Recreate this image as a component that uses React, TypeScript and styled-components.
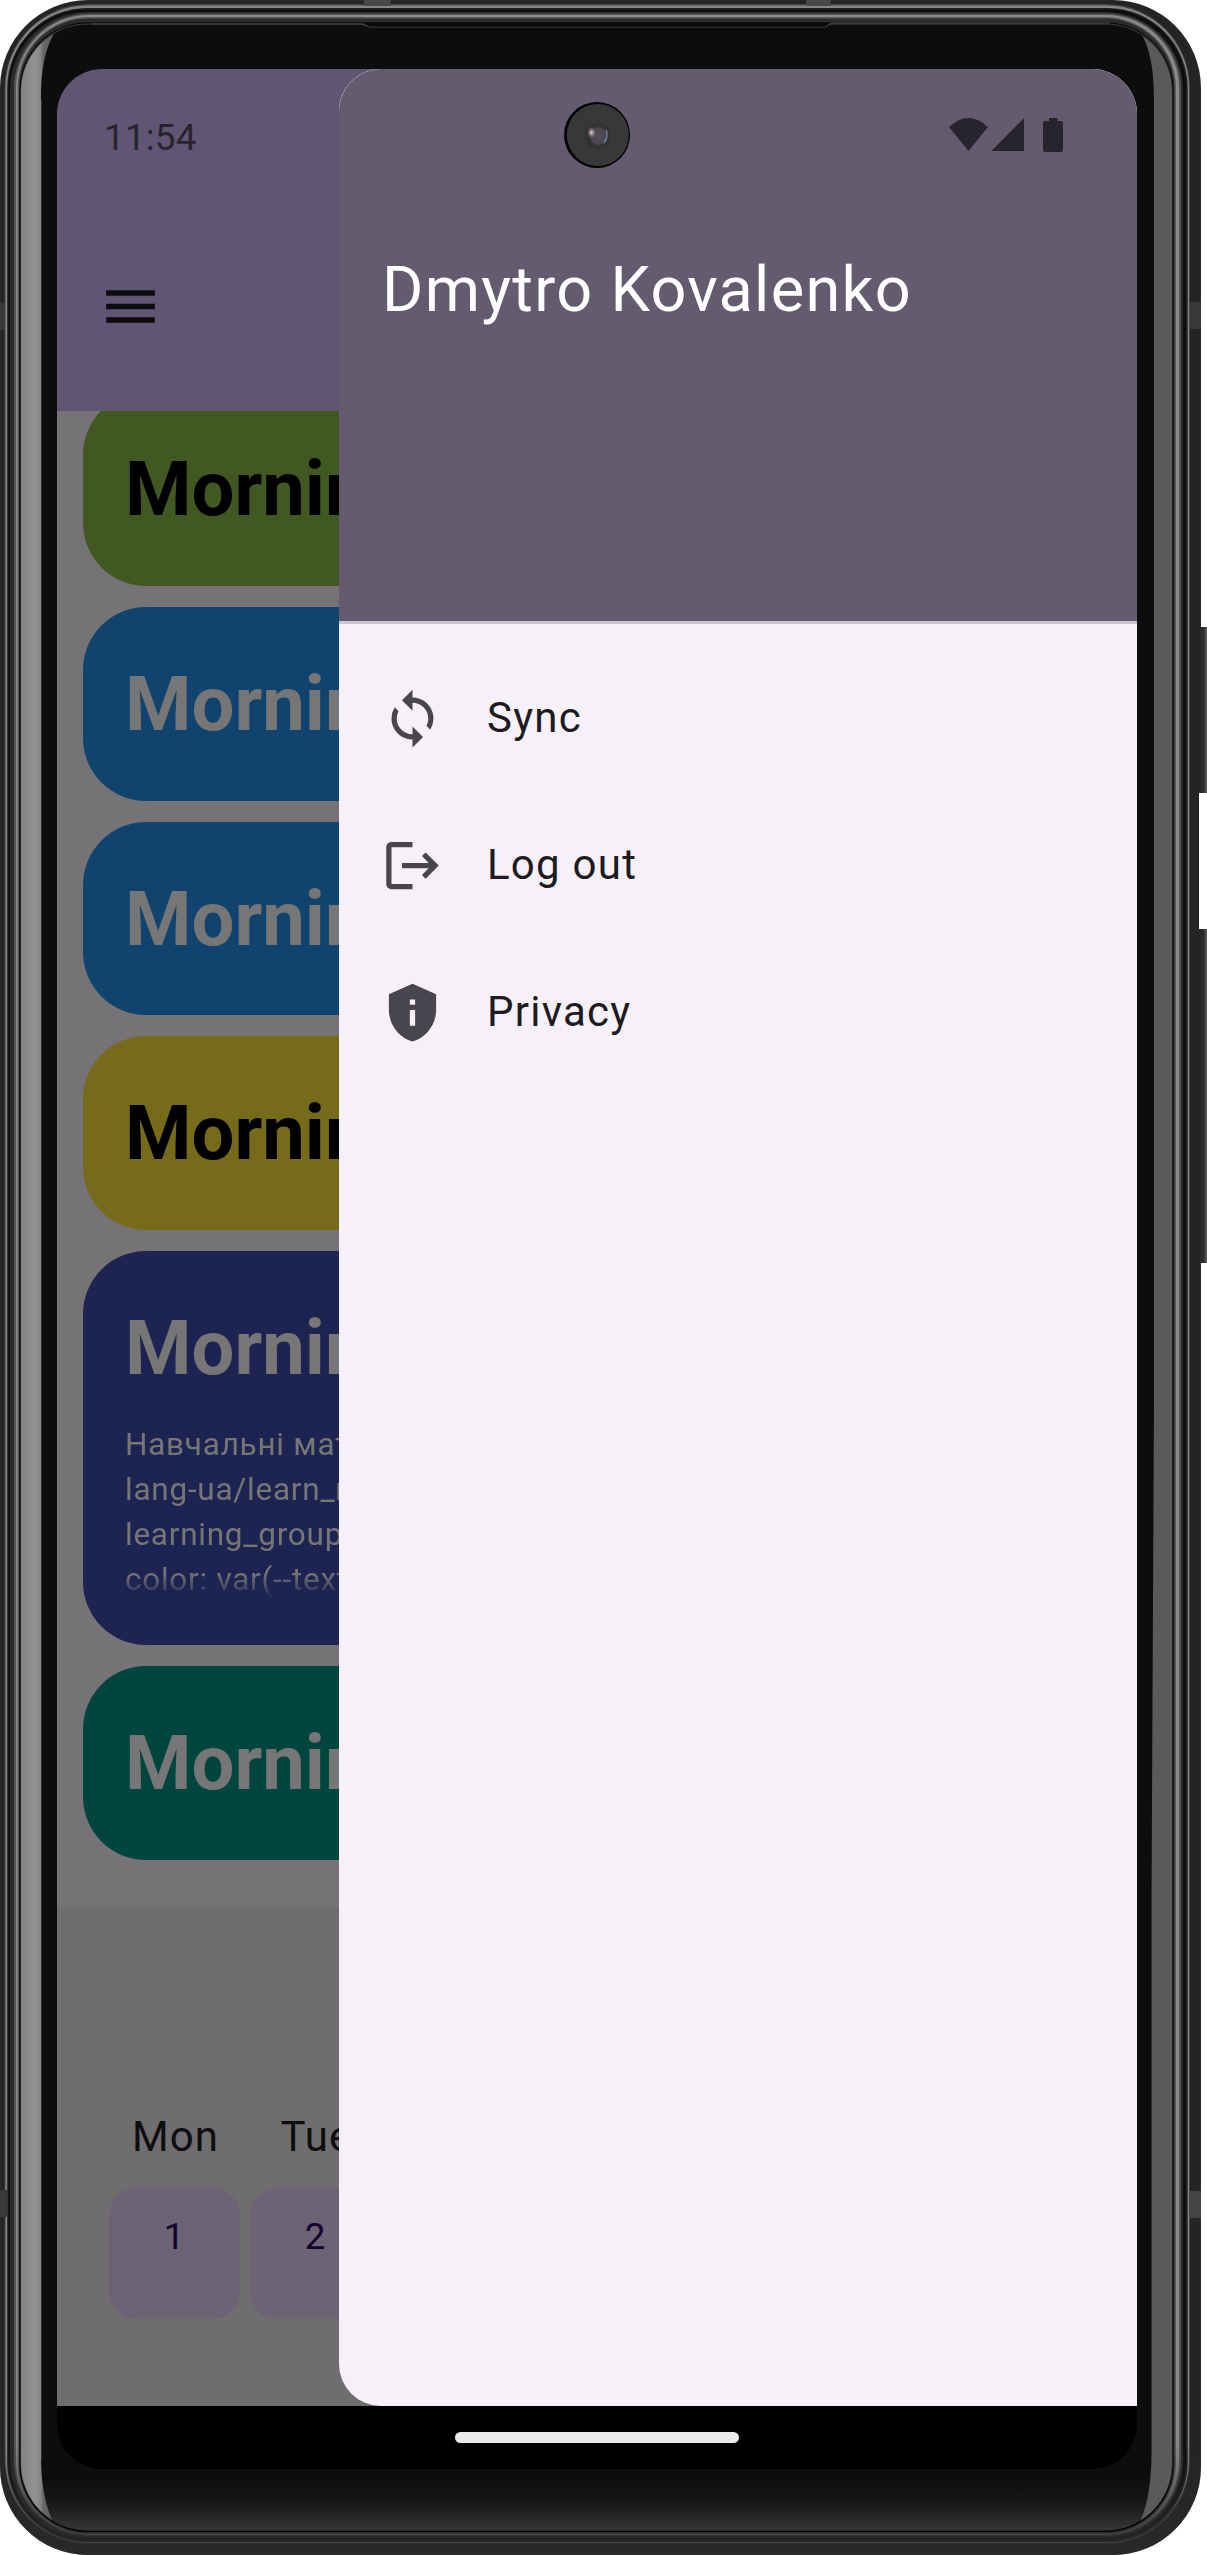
import React from "react";
import styled, { createGlobalStyle, css } from "styled-components";
import { MdLogout, MdMenu, MdPrivacyTip, MdSync } from "react-icons/md";

const Global = createGlobalStyle`
  * { box-sizing: border-box; }
  body { margin: 0; background: #fff; font-family: Roboto, "Liberation Sans", sans-serif; }
`;

const Device = styled.div`
  position: relative;
  width: 1207px;
  height: 2555px;
  padding: 69px 70px 86px 57px;
  overflow: hidden;
`;

const Shell = styled.svg`
  position: absolute;
  inset: 0;
`;

const Screen = styled.div`
  position: relative;
  display: flex;
  flex-direction: column;
  width: 1080px;
  height: 2400px;
  border-radius: 45px;
  overflow: hidden;
  background: #000;
`;

const Viewport = styled.div`
  position: relative;
  display: flex;
  flex-direction: column;
  height: 2337px;
`;

const AppBar = styled.header`
  flex: none;
  display: flex;
  align-items: center;
  height: 342px;
  padding: 132px 41px 0;
  background: #605674;
  color: #0c0b0e;
`;

const LessonList = styled.main`
  flex: none;
  display: flex;
  flex-direction: column;
  justify-content: flex-end;
  gap: 21px;
  height: 1496px;
  padding: 0 26px 47.3px;
  overflow: hidden;
  background: #767376;
`;

const LessonCard = styled.article<{ $bg: string; $fg: string; $tall?: boolean }>`
  flex: none;
  height: ${(p) => (p.$tall ? 394 : 193.7)}px;
  padding: 53px 42px 0;
  border-radius: 63px;
  background: ${(p) => p.$bg};
  color: ${(p) => p.$fg};
`;

const LessonTitle = styled.h2`
  margin: 0;
  font-size: 76px;
  line-height: 88px;
  font-weight: 700;
  white-space: nowrap;
`;

const LessonText = styled.p`
  margin: 30px 0 0;
  font-size: 31.5px;
  line-height: 45.1px;
  letter-spacing: 0.75px;
  white-space: pre;
  mask-image: linear-gradient(#000 84%, transparent 99%);
`;

const Calendar = styled.section`
  flex: 1;
  padding: 205px 52px 0;
  background: #6f6d70;
`;

const Week = styled.div`
  display: grid;
  grid-template-columns: repeat(7, 131px);
  column-gap: 10px;
  row-gap: 27px;
`;

const Weekday = styled.div`
  padding-left: 2px;
  font-size: 42px;
  line-height: 49px;
  letter-spacing: 1.1px;
  text-align: center;
  color: #0e0d0f;
`;

const Day = styled.div`
  height: 131px;
  padding-top: 27px;
  border-radius: 27px;
  background: #6c6475;
  color: #13022d;
  font-size: 36.75px;
  line-height: 43px;
  letter-spacing: 0.6px;
  text-align: center;
`;

const Drawer = styled.aside`
  position: absolute;
  top: 0;
  right: 0;
  bottom: 0;
  width: 798px;
  border-radius: 42px 0 0 42px;
  overflow: hidden;
  background: #f6f1f9;
`;

const DrawerHeader = styled.div`
  height: 555px;
  padding: 184px 43px 0;
  border-bottom: 3px solid #cbc4d1;
  background: #645b71;
`;

const UserName = styled.h1`
  margin: 0;
  font-size: 63px;
  line-height: 74px;
  font-weight: 400;
  letter-spacing: 1.3px;
  color: #fff;
  white-space: nowrap;
`;

const Menu = styled.nav`
  display: flex;
  flex-direction: column;
  padding-top: 21px;
`;

const MenuItem = styled.a`
  display: flex;
  align-items: center;
  gap: 43px;
  height: 147px;
  padding: 0 42px;
  font-size: 42px;
  letter-spacing: 1.25px;
  color: #1d1b20;

  svg {
    flex: none;
    color: #49454f;
  }
`;

const MenuLabel = styled.span`
  padding-bottom: 2px;
`;

const overlay = css`
  position: absolute;
  pointer-events: none;
`;

const EdgeGlint = styled.svg`
  ${overlay}
  top: 0;
  left: 282px;
`;

const StatusBar = styled.div`
  ${overlay}
  top: 0;
  left: 0;
  right: 0;
  display: flex;
  align-items: center;
  justify-content: space-between;
  height: 137px;
  padding: 0 72px 0 47px;
  color: #28242e;
  font-size: 36.75px;
  letter-spacing: 0.2px;
`;

const StatusIcons = styled.svg`
  margin-bottom: 5px;
`;

const Camera = styled.svg`
  ${overlay}
  top: 33px;
  left: 507px;
`;

const GestureBar = styled.div`
  flex: 1;
  display: flex;
  align-items: center;
  justify-content: center;
`;

const GesturePill = styled.div`
  width: 284px;
  height: 11px;
  border-radius: 6px;
  background: #ebebeb;
`;

/* Each band of the metal rim: insets from left, top, right, bottom, then radius and fill. */
const rim: [number, number, number, number, number, string][] = [
  [0, 0, 0, 0, 88, "#2a2a2a"],
  [1, 1, 1, 1, 87, "#242424"],
  [4.5, 4, 11, 11, 84, "#454545"],
  [5.5, 5.5, 12, 12, 82, "#858585"],
  [7.2, 8, 13.3, 13, 80, "#202020"],
  [8.5, 9.5, 15, 15, 78, "#0d0d0d"],
  [10, 12, 18, 17, 77, "#2a2a2a"],
  [14, 13.5, 20, 19, 75, "#555555"],
  [16, 15, 22, 20, 73, "#8b8b8b"],
  [17.5, 17, 25, 21, 71, "#5a5a5a"],
  [19, 18.5, 26.5, 22, 69, "#2b2b2b"],
  [19.5, 22.5, 27.5, 23, 68, "#000000"],
  [20.5, 23.5, 28.5, 24.5, 67, "#444444"],
  [21.2, 24.6, 29, 25, 66, "#0d0d0d"],
];

function PhoneShell() {
  return (
    <Shell width="1207" height="2555" viewBox="0 0 1207 2555">
      <defs>
        <linearGradient id="key" x1="0" x2="1">
          <stop offset="0" stopColor="#202020" />
          <stop offset="0.6" stopColor="#303030" />
          <stop offset="1" stopColor="#777" />
        </linearGradient>
        <linearGradient id="lowShade" x1="0" y1="0" x2="0" y2="1">
          <stop offset="0" stopColor="#2a2a2a" stopOpacity="0" />
          <stop offset="0.75" stopColor="#2a2a2a" stopOpacity="0.72" />
          <stop offset="1" stopColor="#2a2a2a" stopOpacity="0.8" />
        </linearGradient>
        <linearGradient id="leftGlass" x1="0" x2="1">
          <stop offset="0" stopColor="#828282" />
          <stop offset="0.35" stopColor="#929292" />
          <stop offset="0.5" stopColor="#858585" />
          <stop offset="0.57" stopColor="#686868" />
          <stop offset="1" stopColor="#505050" />
        </linearGradient>
        <linearGradient id="chin" x1="0" y1="0" x2="0" y2="1">
          <stop offset="0" stopColor="#0f0f0f" />
          <stop offset="0.45" stopColor="#171717" />
          <stop offset="1" stopColor="#373737" />
        </linearGradient>
        <clipPath id="body">
          <rect width="1201" height="2555" rx="88" />
        </clipPath>
        <clipPath id="glass">
          <rect x="21" y="25" width="1151" height="2505" rx="66" />
        </clipPath>
      </defs>
      <rect x="1198" y="627" width="10" height="166" fill="url(#key)" />
      <rect x="1198" y="929" width="10" height="334" fill="url(#key)" />
      {rim.slice(0, 11).map(([l, t, r, b, radius, fill], i) => (
        <rect key={i} x={l} y={t} width={1201 - l - r} height={2555 - t - b} rx={radius} fill={fill} />
      ))}
      <g clipPath="url(#body)">
        <rect y="2440" width="1201" height="115" fill="url(#lowShade)" />
        <rect y="303" width="5" height="27" fill="#393939" />
        <rect x="1190" y="302" width="11" height="27" fill="#393939" />
        <rect y="2190" width="7" height="27" fill="#393939" />
        <rect x="1190" y="2191" width="11" height="27" fill="#444" />
        <rect x="364" width="27" height="6" fill="#484848" />
        <rect x="806" width="25" height="6" fill="#484848" />
        <rect x="1199" y="793" width="2" height="136" fill="#fff" />
      </g>
      {rim.slice(11).map(([l, t, r, b, radius, fill], i) => (
        <rect key={i} x={l} y={t} width={1201 - l - r} height={2555 - t - b} rx={radius} fill={fill} />
      ))}
      <g clipPath="url(#glass)">
        <rect x="21" y="2480" width="1151" height="50" fill="url(#chin)" />
        <path
          d="M21 25 H60 C46 43 41 65 41 100 V2455 C41 2490 47 2512 57 2530 H21 Z"
          fill="url(#leftGlass)"
        />
        <path
          d="M1172 25 H1136 C1149 43 1154 65 1154 100 V1400 L1151.500 1900 V2455 C1151 2490 1146 2512 1136 2530 H1172 Z"
          fill="#5a5a5a"
        />
        <rect x="41" y="100" width="1" height="2360" fill="#333" />
      </g>
      <path d="M92 24 H362 L369 27 H825 L832 23 H1110" fill="none" stroke="#4a4a4a" strokeWidth="1" />
      <path d="M364 23 H830 L824 26.500 H370 Z" fill="#0a0a0a" />
    </Shell>
  );
}

const lessons = [
  { bg: "#415823", fg: "#000" },
  { bg: "#10446f", fg: "#767676" },
  { bg: "#10446f", fg: "#767676" },
  { bg: "#756b1b", fg: "#000" },
  {
    bg: "#1d2451",
    fg: "#767676",
    text: "Навчальні матеріали\nlang-ua/learn_more\nlearning_groups\ncolor: var(--text)",
  },
  { bg: "#00463e", fg: "#767676" },
];

const weekdays = ["Mon", "Tue", "Wed", "Thu", "Fri", "Sat", "Sun"];

const actions = [
  { label: "Sync", Icon: MdSync },
  { label: "Log out", Icon: MdLogout },
  { label: "Privacy", Icon: MdPrivacyTip },
];

export default function App() {
  return (
    <>
      <Global />
      <Device>
        <PhoneShell />
        <Screen>
          <Viewport>
            <AppBar>
              <MdMenu size={65} />
            </AppBar>
            <LessonList>
              {lessons.map((l, i) => (
                <LessonCard key={i} $bg={l.bg} $fg={l.fg} $tall={!!l.text}>
                  <LessonTitle>Morning</LessonTitle>
                  {l.text && <LessonText>{l.text}</LessonText>}
                </LessonCard>
              ))}
            </LessonList>
            <Calendar>
              <Week>
                {weekdays.map((d) => (
                  <Weekday key={d}>{d}</Weekday>
                ))}
                {weekdays.map((d, i) => (
                  <Day key={d}>{i + 1}</Day>
                ))}
              </Week>
            </Calendar>
            <Drawer>
              <DrawerHeader>
                <UserName>Dmytro Kovalenko</UserName>
              </DrawerHeader>
              <Menu>
                {actions.map(({ label, Icon }) => (
                  <MenuItem key={label}>
                    <Icon size={63} />
                    <MenuLabel>{label}</MenuLabel>
                  </MenuItem>
                ))}
              </Menu>
            </Drawer>
            <EdgeGlint width="44" height="44" viewBox="0 0 44 44">
              <path
                d="M0.500 36 A42 42 0 0 1 36 0.500"
                fill="none"
                stroke="#bdb8c4"
                strokeWidth="0.800"
                strokeDasharray="1.500 1.500"
              />
            </EdgeGlint>
          </Viewport>
          <GestureBar>
            <GesturePill />
          </GestureBar>
          <StatusBar>
            <span>11:54</span>
            <StatusIcons width="117" height="36" viewBox="948 117 117 36" fill="currentColor">
              <path d="M949 127 Q968.500 109 988 127 L968.500 151 Z" />
              <path d="M1024 118 V151 H991.300 Z" />
              <path d="M1049 118 H1057.500 V121 H1061 Q1063 121 1063 123 V150 Q1063 152 1061 152 H1045 Q1043 152 1043 150 V123 Q1043 121 1045 121 H1049 Z" />
            </StatusIcons>
          </StatusBar>
          <Camera width="66" height="66" viewBox="0 0 66 66">
            <defs>
              <radialGradient id="lens">
                <stop offset="0" stopColor="#554e5a" />
                <stop offset="0.800" stopColor="#4b4550" />
                <stop offset="1" stopColor="#303030" />
              </radialGradient>
              <radialGradient id="spark">
                <stop offset="0" stopColor="#e6dadd" />
                <stop offset="1" stopColor="#81757c" stopOpacity="0" />
              </radialGradient>
            </defs>
            <circle cx="33" cy="33" r="33" fill="#000" />
            <circle cx="33.800" cy="33" r="31" fill="#383838" />
            <circle cx="33.500" cy="33.500" r="13" fill="#323232" />
            <ellipse cx="34.500" cy="34" rx="9.500" ry="10" fill="url(#lens)" />
            <ellipse cx="27.500" cy="30.500" rx="4.500" ry="6" fill="url(#spark)" />
            <path d="M42 28 Q45 34 40 41" fill="none" stroke="#65809a" strokeWidth="1.500" />
          </Camera>
        </Screen>
      </Device>
    </>
  );
}
